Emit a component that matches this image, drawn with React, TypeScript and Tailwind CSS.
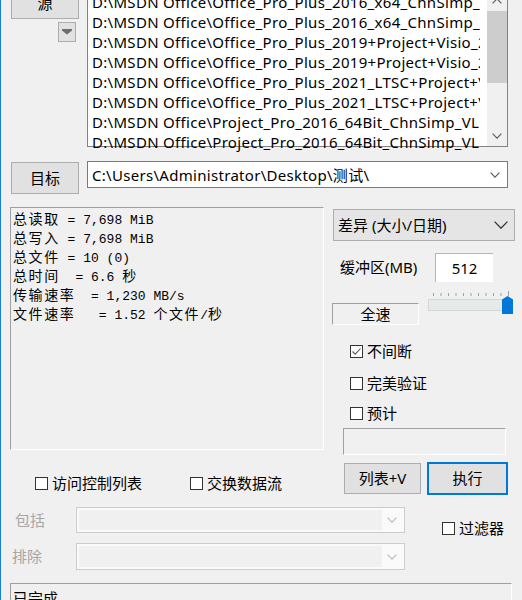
import React from "react";

function Chevron({ w = 10, h = 6, color = "#606060", sw = 1.2 }: { w?: number; h?: number; color?: string; sw?: number }) {
  return (
    <svg width={w} height={h} viewBox={`0 0 ${w} ${h}`}>
      <path d={`M0.6 0.6 L${w / 2} ${h - 0.8} L${w - 0.6} 0.6`} fill="none" stroke={color} strokeWidth={sw} />
    </svg>
  );
}

function ChevronUp({ w = 10, h = 6, color = "#606060", sw = 1.2 }: { w?: number; h?: number; color?: string; sw?: number }) {
  return (
    <svg width={w} height={h} viewBox={`0 0 ${w} ${h}`}>
      <path d={`M0.6 ${h - 0.6} L${w / 2} 0.8 L${w - 0.6} ${h - 0.6}`} fill="none" stroke={color} strokeWidth={sw} />
    </svg>
  );
}

function CheckBox({ checked = false, label, className = "" }: { checked?: boolean; label: string; className?: string }) {
  return (
    <div className={"flex items-center h-[20px] " + className}>
      <div className="w-[13px] h-[13px] border border-[#333333] bg-white flex items-center justify-center shrink-0">
        {checked && (
          <svg width="11" height="11" viewBox="0 0 11 11">
            <path d="M1.5 5.5 L4.2 8.2 L9.5 2.5" fill="none" stroke="#5a5a5a" strokeWidth="1.1" />
          </svg>
        )}
      </div>
      <span className="ml-[4px] text-[15px] leading-[20px] whitespace-nowrap">{label}</span>
    </div>
  );
}

function C({ children }: { children: React.ReactNode }) {
  return <span className="font-['Noto_Sans_CJK_SC',sans-serif] text-[14px] tracking-[1.6px]">{children}</span>;
}

const listRows = [
  "D:\\MSDN Office\\Office_Pro_Plus_2016_x64_ChnSimp_VL.iso",
  "D:\\MSDN Office\\Office_Pro_Plus_2016_x64_ChnSimp_VL.iso",
  "D:\\MSDN Office\\Office_Pro_Plus_2019+Project+Visio_2019.iso",
  "D:\\MSDN Office\\Office_Pro_Plus_2019+Project+Visio_2019.iso",
  "D:\\MSDN Office\\Office_Pro_Plus_2021_LTSC+Project+Visio.iso",
  "D:\\MSDN Office\\Office_Pro_Plus_2021_LTSC+Project+Visio.iso",
  "D:\\MSDN Office\\Project_Pro_2016_64Bit_ChnSimp_VL.iso",
  "D:\\MSDN Office\\Project_Pro_2016_64Bit_ChnSimp_VL.iso",
];

export default function App() {
  const ticks = Array.from({ length: 11 }, (_, i) => 0.5 + i * 7.5);
  return (
    <div className="w-[522px] h-[600px] overflow-hidden bg-[#f0f0f0] border-l border-[#1a7fd4] text-black font-['Noto_Sans','Noto_Sans_CJK_SC',sans-serif] select-none">
      {/* Source row */}
      <div className="flex items-start mt-[-13px] pl-[10px]">
        <div className="w-[68px] flex flex-col shrink-0">
          <div className="w-[68px] h-[32px] border border-[#adadad] bg-[#e1e1e1] flex items-center justify-center text-[15px]">源</div>
          <div className="ml-[47px] mt-[3px] w-[18px] h-[20px] border border-[#adadad] bg-[#e1e1e1] flex items-center justify-center">
            <svg width="10" height="6" viewBox="0 0 10 6">
              <path d="M0 0 H10 V1.5 L5 5.5 L0 1.5 Z" fill="#6d6d6d" />
            </svg>
          </div>
        </div>
        <div className="ml-[8px] mt-[3px] w-[421px] h-[157px] border border-[#828282] bg-white flex shrink-0">
          <div className="flex-1 pt-[1px] pl-[4px]">
            <div className="w-[388px] overflow-hidden">
              {listRows.map((r, i) => (
                <div key={i} className="h-[20px] leading-[20px] text-[15px] tracking-[0.3px] whitespace-nowrap">{r}</div>
              ))}
            </div>
          </div>
          <div className="w-[20px] flex flex-col bg-[#f0f0f0]">
            <div className="h-[20px] flex items-center justify-center">
              <ChevronUp w={10} h={6} />
            </div>
            <div className="flex-1">
              <div className="h-[72px] bg-[#cdcdcd]" />
            </div>
            <div className="h-[21px] flex items-center justify-center">
              <Chevron w={10} h={6} />
            </div>
          </div>
        </div>
      </div>

      {/* Destination row */}
      <div className="flex items-start mt-[14px] pl-[10px]">
        <div className="mt-[1px] w-[68px] h-[32px] border border-[#adadad] bg-[#e1e1e1] flex items-center justify-center text-[15px] shrink-0">目标</div>
        <div className="ml-[8px] w-[421px] h-[27px] border border-[#7a7a7a] bg-white flex items-center justify-between pl-[4px] pr-[7px] shrink-0">
          <span className="text-[15px] leading-[20px] tracking-[0.3px] whitespace-nowrap">C:\Users\Administrator\Desktop\测试\</span>
          <Chevron w={10} h={6} />
        </div>
      </div>

      {/* Middle section */}
      <div className="flex items-start mt-[13px]">
        <div className="ml-[9px] w-[314px] flex flex-col shrink-0">
          <div className="h-[243px] border border-t-[#a0a0a0] border-l-[#a0a0a0] border-r-white border-b-white pt-[2px] pl-[2px] font-['Liberation_Mono','Noto_Sans_CJK_SC',monospace] text-[13px] leading-[16px] whitespace-pre">
            <div><C>总读取</C> = 7,698 MiB</div>
            <div><C>总写入</C> = 7,698 MiB</div>
            <div><C>总文件</C> = 10 (0)</div>
            <div><C>总时间</C>  = 6.6 <C>秒</C></div>
            <div><C>传输速率</C>  = 1,230 MB/s</div>
            <div><C>文件速率</C>   = 1.52 <C>个文件</C>/<C>秒</C></div>
          </div>
          <div className="flex mt-[23px]">
            <CheckBox label="访问控制列表" className="ml-[25px] w-[155px]" />
            <CheckBox label="交换数据流" />
          </div>
        </div>

        <div className="ml-[9px] w-[182px] flex flex-col shrink-0">
          <div className="mt-[2px] h-[32px] border border-[#adadad] bg-[#e5e5e5] flex items-center justify-between pl-[4px] pr-[6px]">
            <span className="text-[15px] leading-[20px] whitespace-nowrap">差异 (大小/日期)</span>
            <Chevron w={14} h={8} color="#333333" sw={1.3} />
          </div>
          <div className="mt-[12px] flex h-[29px]">
            <div className="w-[102px] pl-[7px] flex items-center text-[15px] whitespace-nowrap">缓冲区(MB)</div>
            <div className="w-[58px] h-[29px] bg-white border-t border-l border-[#b4b4b4] flex items-center justify-center text-[15px]">512</div>
          </div>
          <div className="flex items-start">
            <div className="ml-[-1px] mt-[21px] w-[87px] h-[22px] border border-t-[#a0a0a0] border-l-[#a0a0a0] border-r-white border-b-white flex items-center justify-center text-[15px] leading-[20px]">全速</div>
            <div className="ml-[9px] mt-[9px] w-[85px] flex flex-col">
              <svg width="85" height="5" viewBox="0 0 85 5">
                {ticks.map((x, i) => (
                  <line key={i} x1={x + 5} y1={i === 10 ? 0 : 2} x2={x + 5} y2={5} stroke="#a0a0a0" strokeWidth="1" />
                ))}
              </svg>
              <div className="mt-[3px] h-[12px] border border-[#d6d6d6] bg-[#e7eaea] relative">
                <svg width="11" height="18" viewBox="0 0 11 18" className="absolute right-[-1px] top-[-4px]">
                  <path d="M0 3.5 L5.5 0 L11 3.5 V18 H0 Z" fill="#0078d7" />
                </svg>
              </div>
            </div>
          </div>
          <div className="pl-[17px] flex flex-col">
            <CheckBox checked label="不间断" className="mt-[16px]" />
            <CheckBox label="完美验证" className="mt-[12px]" />
            <CheckBox label="预计" className="mt-[10px]" />
          </div>
          <div className="mt-[5px] ml-[10px] w-[163px] h-[27px] border border-t-[#a0a0a0] border-l-[#a0a0a0] border-r-white border-b-white" />
          <div className="mt-[7px] ml-[11px] flex items-center gap-[6px]">
            <div className="w-[77px] h-[31px] border border-[#adadad] bg-[#e1e1e1] flex items-center justify-center text-[15px]">列表+V</div>
            <div className="w-[81px] h-[33px] border-2 border-[#0078d7] bg-[#e1e1e1] flex items-center justify-center text-[15px]">执行</div>
          </div>
        </div>
      </div>

      {/* Include / exclude */}
      <div className="flex items-start mt-[12px]">
        <div className="flex flex-col gap-[10px]">
          <div className="flex items-center h-[26px]">
            <div className="w-[75px] pl-[14px] text-[15px] text-[#a6a6a6]">包括</div>
            <div className="w-[329px] h-[26px] border border-[#cccccc] bg-[#fafafa] flex items-center p-[2px]">
              <div className="w-[303px] h-full bg-[#f0f0f0]" />
              <div className="flex-1 flex items-center justify-center">
                <Chevron w={10} h={6} color="#bdbdbd" />
              </div>
            </div>
          </div>
          <div className="flex items-center h-[27px]">
            <div className="w-[75px] pl-[11px] text-[15px] text-[#a6a6a6]">排除</div>
            <div className="w-[329px] h-[27px] border border-[#cccccc] bg-[#fafafa] flex items-center p-[2px]">
              <div className="w-[303px] h-full bg-[#f0f0f0]" />
              <div className="flex-1 flex items-center justify-center">
                <Chevron w={10} h={6} color="#bdbdbd" />
              </div>
            </div>
          </div>
        </div>
        <CheckBox label="过滤器" className="ml-[37px] mt-[11px]" />
      </div>

      {/* Status */}
      <div className="mt-[13px] ml-[9px] w-[502px] h-[40px] border border-t-[#a0a0a0] border-l-[#a0a0a0] border-r-white border-b-white pl-[2px] pt-[4px] text-[15px] leading-[20px]">已完成</div>
    </div>
  );
}
